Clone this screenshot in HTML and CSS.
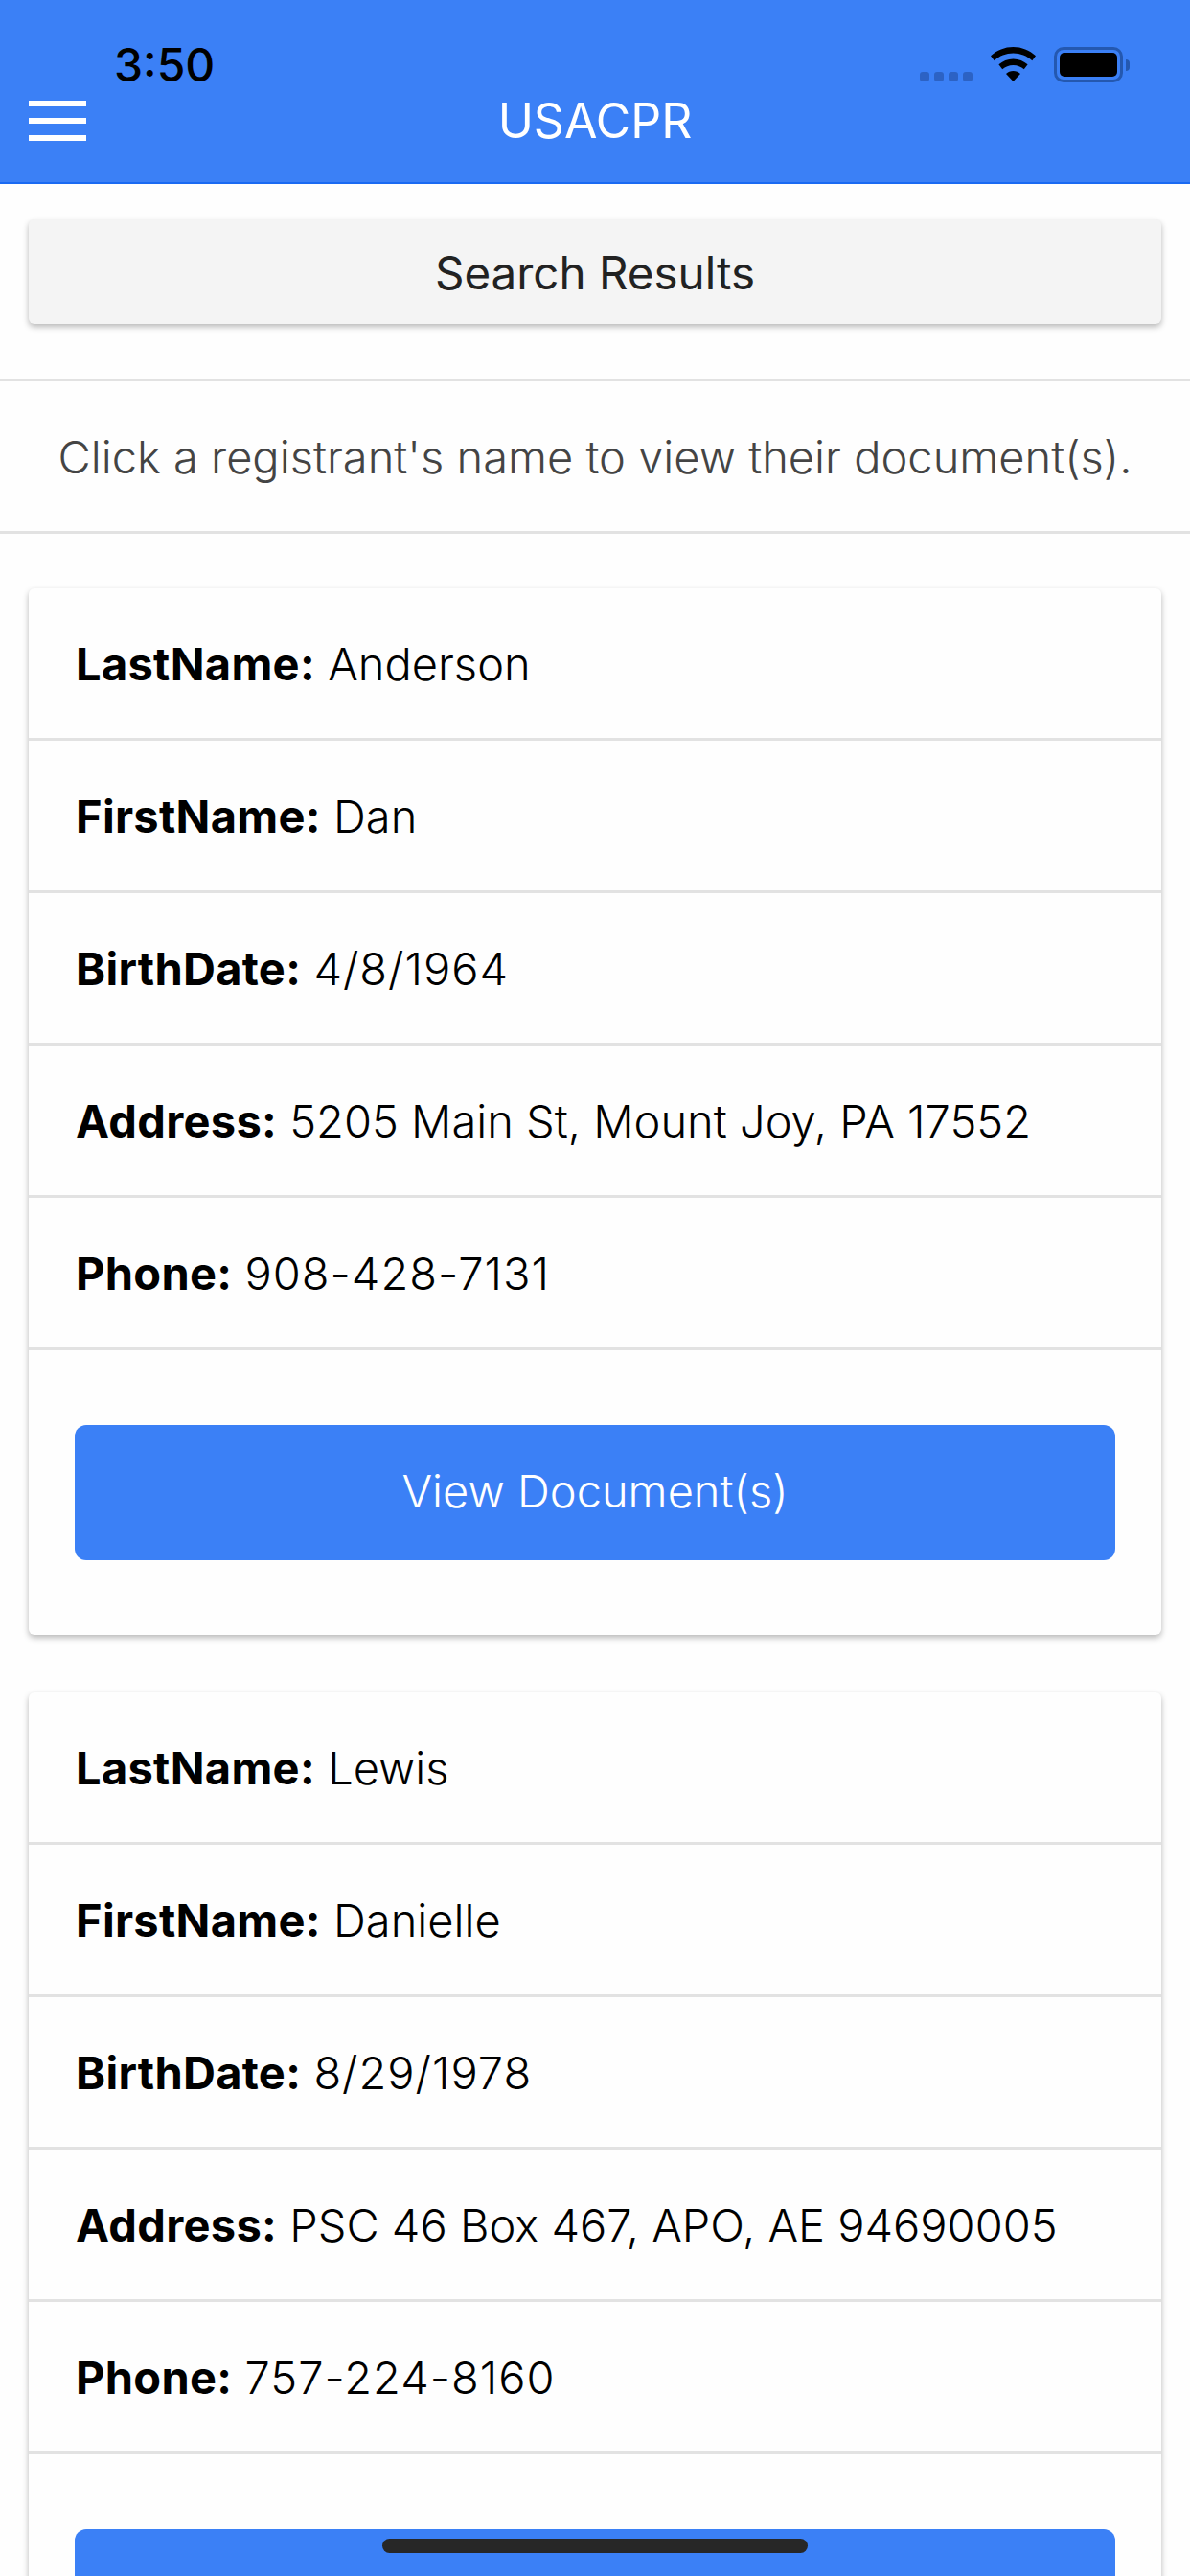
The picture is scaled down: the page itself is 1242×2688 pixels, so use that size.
FILE: index.html
```html
<!DOCTYPE html>
<html lang="en">
<head>
<meta charset="utf-8">
<title>USACPR</title>
<link rel="stylesheet" href="styles.css">
</head>
<body>
<div class="screen">
  <header class="app-header">
    <div class="status-bar">
      <span class="time">3:50</span>
      <div class="status-icons">
        <div class="signal"><i></i><i></i><i></i><i></i></div>
        <svg class="wifi" width="47" height="36" viewBox="0 0 47 36"><path d="M23.5 0C14.6 0 6.6 3.4 0 9.3l3.7 5C9.2 9.4 16 6.6 23.5 6.6S37.8 9.4 43.3 14.3l3.7-5C40.4 3.4 32.4 0 23.5 0z"/><path d="M23.5 12.4c-5.800 0-11 2.200-15.100 5.900l3.800 5c3-2.700 6.900-4.300 11.300-4.300s8.300 1.600 11.300 4.300l3.800-5c-4.100-3.700-9.300-5.900-15.100-5.900z"/><path d="M23.500 25c-2.900 0-5.500 1.100-7.500 2.900L23.500 36 31 27.900c-2-1.800-4.600-2.900-7.500-2.900z"/></svg>
        <div class="battery"><div class="battery-body"><div class="battery-fill"></div></div><div class="battery-cap"></div></div>
      </div>
    </div>
    <div class="nav-bar">
      <button class="menu" aria-label="Menu"><span></span><span></span><span></span></button>
      <h1 class="title">USACPR</h1>
    </div>
  </header>

  <main class="content">
    <div class="section-bar">Search Results</div>
    <p class="hint">Click a registrant's name to view their document(s).</p>

    <section class="card">
      <div class="row"><b>LastName:</b> Anderson</div>
      <div class="row"><b>FirstName:</b> Dan</div>
      <div class="row"><b>BirthDate:</b> <span class="num">4/8/1964</span></div>
      <div class="row"><b>Address:</b> 5205 Main St, Mount Joy, PA 17552</div>
      <div class="row"><b>Phone:</b> <span class="num">908-428-7131</span></div>
      <div class="actions"><a class="btn">View Document(s)</a></div>
    </section>

    <section class="card">
      <div class="row"><b>LastName:</b> Lewis</div>
      <div class="row"><b>FirstName:</b> Danielle</div>
      <div class="row"><b>BirthDate:</b> <span class="num">8/29/1978</span></div>
      <div class="row"><b>Address:</b> PSC 46 Box 467, APO, AE 94690005</div>
      <div class="row"><b>Phone:</b> <span class="num">757-224-8160</span></div>
      <div class="actions"><a class="btn">View Document(s)</a></div>
    </section>
  </main>

  <div class="home-indicator"></div>
</div>
</body>
</html>
```

FILE: styles.css
```css
* { box-sizing: border-box; }
html, body { margin: 0; padding: 0; }
body { background: #fff; font-family: Inter, "Liberation Sans", sans-serif; }
.screen { position: relative; width: 1242px; height: 2688px; overflow: hidden; background: #fefefe; }

.app-header { height: 192px; background: #3b80f6; border-bottom: 2px solid #1a6af2; }
.status-bar { height: 94px; padding: 44px 63px 0 119px; display: flex; justify-content: space-between; align-items: flex-start; }
.time { font-size: 48px; line-height: 47px; font-weight: 500; color: #000; }
.status-icons { display: flex; align-items: flex-start; padding-top: 5px; }
.signal { display: flex; gap: 5px; margin-top: 26px; margin-right: 19px; }
.signal i { display: block; width: 10px; height: 10px; border-radius: 3px; background: #2c62c4; }
.wifi { display: block; fill: #000; margin-right: 19px; }
.battery { display: flex; align-items: center; }
.battery-body { width: 72px; height: 37px; border: 3px solid #2458b0; border-radius: 10px; padding: 3px; }
.battery-fill { width: 100%; height: 100%; background: #000; border-radius: 5px; }
.battery-cap { width: 4px; height: 12px; margin-left: 3px; background: #2458b0; border-radius: 0 6px 6px 0; }

.nav-bar { position: relative; height: 96px; display: flex; align-items: flex-start; justify-content: center; }
.menu { position: absolute; left: 30px; top: 11px; width: 60px; height: 42px; padding: 0; border: 0; background: none; display: flex; flex-direction: column; justify-content: space-between; }
.menu span { display: block; height: 6px; background: #fff; }
.title { margin: 0; padding-top: 2px; font-size: 50px; line-height: 60px; font-weight: 400; color: #fff; }

.content { padding-top: 37px; }
.section-bar { margin: 0 30px; height: 109px; padding-top: 2px; border-radius: 6px; background: #f4f4f4; box-shadow: 0 3px 6px rgba(0,0,0,.28); display: flex; align-items: center; justify-content: center; font-size: 47.500px; font-weight: 400; color: #222; }
.hint { margin: 57px 0 57px; height: 162px; border-top: 3px solid #e2e2e2; border-bottom: 3px solid #e2e2e2; display: flex; align-items: center; justify-content: center; font-size: 47px; font-weight: 300; color: #444; }

.card { margin: 0 30px 60px; height: 1092px; background: #fefefe; border-radius: 6px; box-shadow: 0 3px 6px rgba(0,0,0,.28); display: flex; flex-direction: column; }
.row { height: 159px; padding: 51px 49px 0; line-height: 56px; border-bottom: 3px solid #e2e2e2; font-size: 47px; font-weight: 300; color: #000; white-space: nowrap; }
.row b { font-weight: 700; letter-spacing: .3px; }
.num { letter-spacing: 1px; }
.actions { padding: 78px 48px 0; }
.btn { display: flex; height: 141px; padding-bottom: 4px; align-items: center; justify-content: center; background: #3b80f6; border-radius: 12px; font-size: 47px; font-weight: 300; color: #fff; }

.home-indicator { position: absolute; left: 399px; top: 2649px; width: 444px; height: 15px; border-radius: 8px; background: #272727; }
```
